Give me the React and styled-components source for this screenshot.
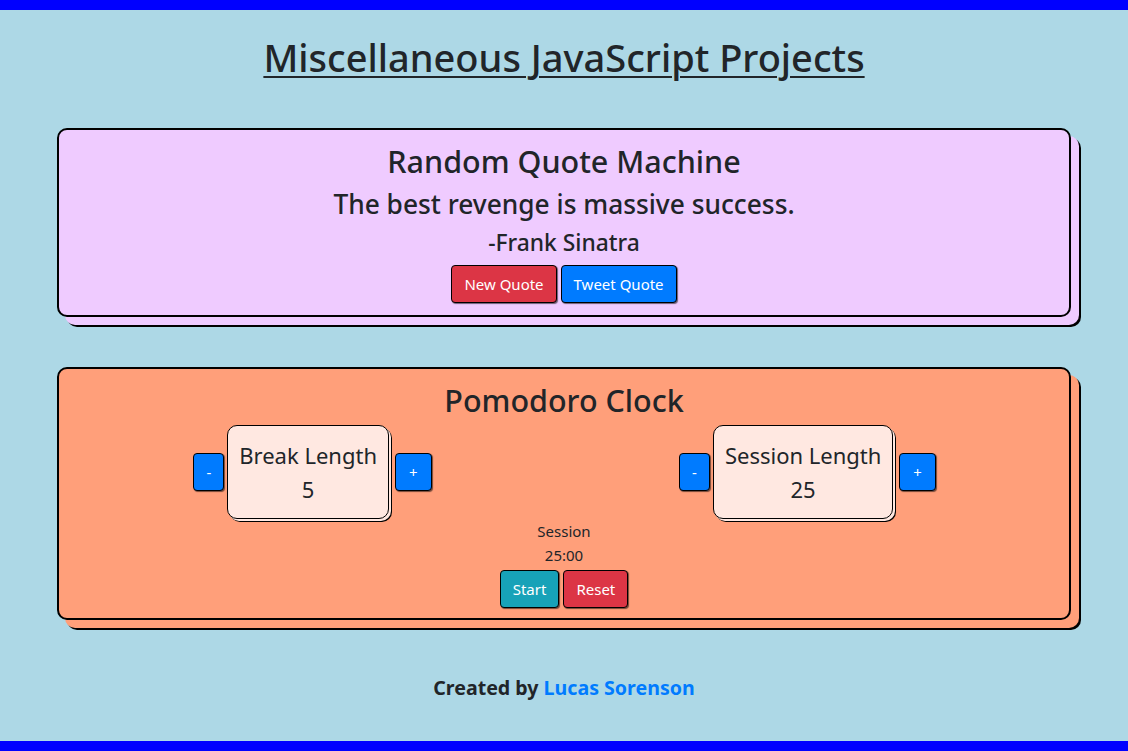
import React from "react";
import styled, { createGlobalStyle } from "styled-components";

const Global = createGlobalStyle`
  html, body { margin: 0; padding: 0; }
  body {
    font-family: "Noto Sans", "Open Sans", sans-serif;
    color: #212529;
    background: #add8e6;
  }
  * { box-sizing: border-box; }
`;

const Page = styled.div`
  min-height: 100vh;
  border-top: 10px solid #0000ff;
  border-bottom: 10px solid #0000ff;
  background: #add8e6;
  padding-top: 23px;
  display: flex;
  flex-direction: column;
  align-items: stretch;
`;

const MainTitle = styled.h1`
  margin: 0 0 47px;
  text-align: center;
  font-size: 38px;
  font-weight: 500;
  line-height: 48px;
  text-decoration: underline;
  text-decoration-thickness: 2px;
  text-underline-offset: 4px;
`;

const Card = styled.section`
  margin: 0 57px ${(p) => p.$gap}px;
  background: ${(p) => p.$bg};
  border: 2px solid #000;
  border-radius: 10px;
  box-shadow: 8px 8px 0 ${(p) => p.$bg}, 10px 10px 0 #000;
  padding: ${(p) => p.$pad};
  display: flex;
  flex-direction: column;
  align-items: center;
  text-align: center;
`;

const CardTitle = styled.h2`
  margin: 0;
  font-size: 30.5px;
  font-weight: 500;
  line-height: 38px;
`;

const Quote = styled.h3`
  margin: 7px 0 0;
  font-size: 26.3px;
  font-weight: 500;
  line-height: 34px;
`;

const Author = styled.h4`
  margin: 7px 0 0;
  font-size: 22.8px;
  font-weight: 500;
  line-height: 29px;
`;

const ButtonRow = styled.div`
  margin-top: ${(p) => p.$top}px;
  display: flex;
  gap: 4px;
  justify-content: center;
`;

const Button = styled.button`
  font-family: inherit;
  font-size: 15px;
  line-height: 24px;
  height: 38px;
  padding: 0 12px;
  color: #fff;
  background: ${(p) => p.$color};
  border: 1px solid #000;
  border-radius: 4px;
  box-shadow: 1px 1px 1px rgba(0, 0, 0, 0.55);
  cursor: pointer;
`;

const Settings = styled.div`
  margin-top: 6px;
  align-self: stretch;
  display: grid;
  grid-template-columns: 1fr 1fr;
  padding: 0 14px 0 6px;
`;

const Control = styled.div`
  display: flex;
  align-items: center;
  justify-content: center;
  gap: 3px;
`;

const StepButton = styled(Button)`
  padding: 0 ${(p) => p.$px}px;
`;

const LengthBox = styled.div`
  background: #ffe8e1;
  border: 1px solid #000;
  border-radius: 10px;
  box-shadow: 2px 2px 0 #ffe8e1, 3px 3px 0 #000;
  padding: 12px 11px;
  margin-right: 3px;
  font-size: 22px;
  line-height: 34px;
`;

const Status = styled.div`
  font-size: 15px;
  line-height: 24px;
`;

const Footer = styled.p`
  margin: 56px 0 0;
  text-align: center;
  font-size: 19.6px;
  font-weight: 700;
  line-height: 24px;
`;

const Link = styled.a`
  color: #007bff;
  text-decoration: none;
`;

export default function App() {
  return (
    <>
      <Global />
      <Page>
        <MainTitle>Miscellaneous JavaScript Projects</MainTitle>
        <Card $bg="#efcbff" $pad="12px 0 12px" $gap={50}>
          <CardTitle>Random Quote Machine</CardTitle>
          <Quote>The best revenge is massive success.</Quote>
          <Author>-Frank Sinatra</Author>
          <ButtonRow $top={8}>
            <Button $color="#dc3545">New Quote</Button>
            <Button $color="#007bff">Tweet Quote</Button>
          </ButtonRow>
        </Card>
        <Card $bg="#ff9f7a" $pad="12px 0 10px" $gap={0}>
          <CardTitle>Pomodoro Clock</CardTitle>
          <Settings>
            <Control>
              <StepButton $color="#007bff" $px={12}>-</StepButton>
              <LengthBox>
                Break Length
                <br />5
              </LengthBox>
              <StepButton $color="#007bff" $px={13}>+</StepButton>
            </Control>
            <Control>
              <StepButton $color="#007bff" $px={12}>-</StepButton>
              <LengthBox>
                Session Length
                <br />25
              </LengthBox>
              <StepButton $color="#007bff" $px={13}>+</StepButton>
            </Control>
          </Settings>
          <Status>Session</Status>
          <Status>25:00</Status>
          <ButtonRow $top={3}>
            <Button $color="#17a2b8">Start</Button>
            <Button $color="#dc3545">Reset</Button>
          </ButtonRow>
        </Card>
        <Footer>
          Created by <Link href="#">Lucas Sorenson</Link>
        </Footer>
      </Page>
    </>
  );
}
